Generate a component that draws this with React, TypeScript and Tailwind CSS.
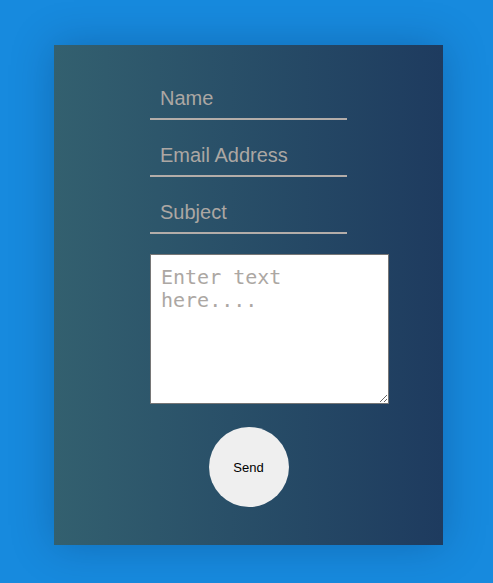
import { useState } from 'react'

const fields = ['Name', 'Email Address', 'Subject']

const App = () => {
  const [values, setValues] = useState<Record<string, string>>({})
  const [message, setMessage] = useState('')

  return (
    <div className="min-h-screen w-full bg-[#178ade] pt-[45px] pl-[54px]">
      <div className="w-[389px] h-[500px] bg-linear-to-r from-[#33606f] to-[#1e3b5f] shadow-[0_0_40px_rgba(0,20,60,0.25)] pt-[32px] pl-[96px]">
        <form className="w-[197px] flex flex-col" onSubmit={(e) => e.preventDefault()}>
          <div className="flex flex-col gap-[14px]">
            {fields.map((f) => (
              <input
                key={f}
                type="text"
                placeholder={f}
                value={values[f] || ''}
                onChange={(e) => setValues({ ...values, [f]: e.target.value })}
                className="w-[197px] h-[43px] bg-transparent border-b-2 border-[#b3ada9] pt-[10px] pb-[8px] px-[10px] text-[20px] leading-[23px] text-[#aca7a3] placeholder:text-[#aca7a3] outline-none font-['Liberation_Sans',Arial,sans-serif]"
              />
            ))}
          </div>
          <textarea
            placeholder="Enter text here...."
            value={message}
            onChange={(e) => setMessage(e.target.value)}
            className="mt-[20px] w-[239px] h-[150px] shrink-0 bg-white border border-[#767676] pt-[11px] pb-[10px] px-[10px] text-[20px] leading-[23px] text-[#333] placeholder:text-[#aca7a3] font-['DejaVu_Sans_Mono',monospace] outline-none"
          />
          <button
            type="submit"
            className="mt-[23px] mx-auto w-[80px] h-[80px] pt-[2px] rounded-full bg-[#efefef] text-black text-[13px] font-['Liberation_Sans',Arial,sans-serif]"
          >
            Send
          </button>
        </form>
      </div>
    </div>
  )
}

export default App
